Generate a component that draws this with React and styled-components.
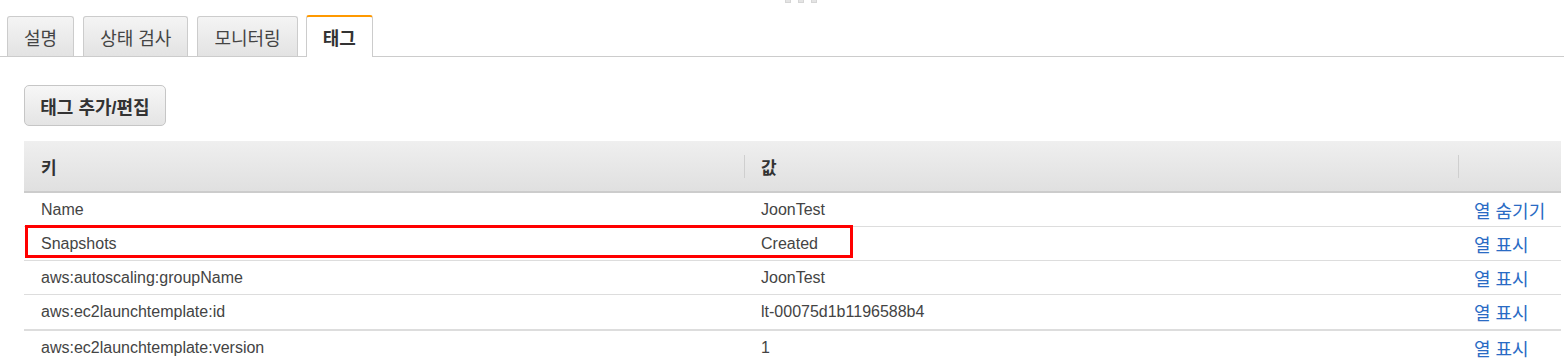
import React from "react";
import styled, { createGlobalStyle } from "styled-components";

const Global = createGlobalStyle`
  html, body { margin: 0; padding: 0; background: #fff; }
  body { font-family: "Liberation Sans", Arial, "Noto Sans CJK KR", sans-serif; color: #444; }
`;

const KR = `"Liberation Sans", Arial, "Noto Sans CJK KR", sans-serif`;

const Page = styled.div`
  width: 1564px;
  height: 361px;
  overflow: hidden;
  position: relative;
`;

const Handle = styled.div`
  display: flex;
  gap: 7px;
  position: absolute;
  left: 785px;
  top: 0;
`;

const Grip = styled.span`
  width: 6px;
  height: 3px;
  background: #e4e4e4;
  border: 1px solid #d6d6d6;
  border-top: none;
  box-sizing: border-box;
`;

const TabBar = styled.div`
  display: flex;
  align-items: flex-end;
  gap: 9px;
  padding: 15px 0 0 7px;
  border-bottom: 1px solid #cccccc;
  height: 57px;
  box-sizing: border-box;
`;

const Tab = styled.div`
  height: ${(p) => (p.$active ? "42px" : "40px")};
  box-sizing: border-box;
  padding: 0 16px;
  display: flex;
  align-items: center;
  font-family: ${KR};
  font-size: 18px;
  font-weight: ${(p) => (p.$active ? 700 : 400)};
  color: ${(p) => (p.$active ? "#333" : "#444")};
  border: 1px solid #cccccc;
  border-bottom: none;
  border-radius: 3px 3px 0 0;
  background: ${(p) =>
    p.$active ? "#fff" : "linear-gradient(#f4f4f4, #e3e3e3)"};
  ${(p) => p.$active && `border-top: 2px solid #ff9900; margin-bottom: -1px; margin-left: -1px;`}
`;

const Content = styled.div`
  padding: 28px 3px 0 24px;
`;

const Button = styled.button`
  height: 41px;
  width: 142px;
  box-sizing: border-box;
  font-family: ${KR};
  font-size: 18px;
  font-weight: 700;
  color: #333;
  background: linear-gradient(#f7f7f7, #e4e4e4);
  border: 1px solid #c6c6c6;
  border-radius: 5px;
  padding: 0;
  display: block;
`;

const Table = styled.div`
  margin-top: 15px;
  width: 1537px;
`;

const HeadRow = styled.div`
  display: grid;
  grid-template-columns: 720px 714px 1fr;
  height: 52px;
  box-sizing: border-box;
  background: linear-gradient(#efefef, #e0e0e0);
  border-bottom: 2px solid #cccccc;
`;

const HeadCell = styled.div`
  display: flex;
  align-items: center;
  padding-left: 17px;
  font-family: ${KR};
  font-size: 17px;
  font-weight: 700;
  color: #333;
  position: relative;
  ${(p) =>
    p.$sep &&
    `&::before { content: ""; position: absolute; left: 0; top: 14px; width: 1px; height: 23px; background: #cfcfcf; }`}
`;

const Row = styled.div`
  display: grid;
  grid-template-columns: 720px 714px 1fr;
  height: ${(p) => (p.$thick ? "36px" : "34px")};
  box-sizing: border-box;
  border-bottom: ${(p) => (p.$thick ? "2px" : "1px")} solid #dddddd;
  position: relative;
`;

const Cell = styled.div`
  display: flex;
  align-items: center;
  padding-left: 17px;
  font-size: 16px;
  color: #444;
  white-space: nowrap;
`;

const LinkCell = styled(Cell)`
  padding-left: 16px;
  font-family: ${KR};
  font-size: 18px;
  color: #2a6bc4;
`;

const Highlight = styled.div`
  position: absolute;
  left: 1px;
  top: -2px;
  width: 828px;
  height: 33px;
  box-sizing: border-box;
  border: 3px solid #ff0000;
  pointer-events: none;
`;

const rows = [
  { k: "Name", v: "JoonTest", a: "열 숨기기" },
  { k: "Snapshots", v: "Created", a: "열 표시", hl: true },
  { k: "aws:autoscaling:groupName", v: "JoonTest", a: "열 표시" },
  { k: "aws:ec2launchtemplate:id", v: "lt-00075d1b1196588b4", a: "열 표시", thick: true },
  { k: "aws:ec2launchtemplate:version", v: "1", a: "열 표시" },
];

export default function App() {
  return (
    <Page>
      <Global />
      <Handle>
        <Grip />
        <Grip />
        <Grip />
      </Handle>
      <TabBar>
        <Tab>설명</Tab>
        <Tab>상태 검사</Tab>
        <Tab>모니터링</Tab>
        <Tab $active>태그</Tab>
      </TabBar>
      <Content>
        <Button>태그 추가/편집</Button>
        <Table>
          <HeadRow>
            <HeadCell>키</HeadCell>
            <HeadCell $sep>값</HeadCell>
            <HeadCell $sep />
          </HeadRow>
          {rows.map((r) => (
            <Row key={r.k} $thick={r.thick}>
              <Cell>{r.k}</Cell>
              <Cell>{r.v}</Cell>
              <LinkCell>{r.a}</LinkCell>
              {r.hl && <Highlight />}
            </Row>
          ))}
        </Table>
      </Content>
    </Page>
  );
}
